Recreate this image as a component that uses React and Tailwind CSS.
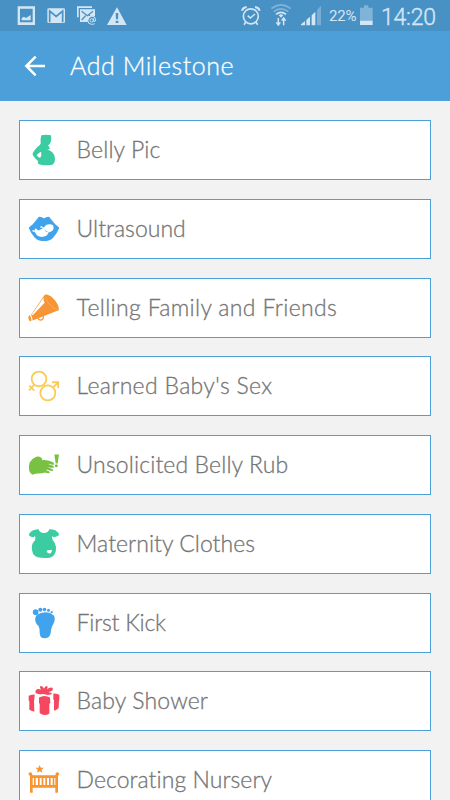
function BellyIcon() {
  return (
    <svg className="h-9 w-8 shrink-0" viewBox="54 60 96 108" fill="#3bcca2">
      <path fillRule="evenodd" d="M94 70q14-3 29 0q2 13-1 21q-2 6-8 9q3 5 6 9q-3 4-8 4q8 1 14 7q9 8 9 20q0 13-8 18q-17 3-32 1q-10-2-12-5q2-4 1-7q-7-6-14-15q-3-4-2-8q5-10 14-19q7-5 10-10q-2-12 2-25zM93 119q-4 1-13 10q1 4 10 9q4-5 4-10q0-5-1-9z" />
    </svg>
  );
}

function UltrasoundIcon() {
  return (
    <svg className="h-9 w-8 shrink-0" viewBox="54 56.4 96 108">
      <path fill="#42a3ed" d="M56 107q15-11 26-27q3-6 7-6q7 0 13 5q6-5 13-5q4 0 7 6q11 16 26 27q-6 16-18 29q-6 7-14 9q-14 3-28 0q-8-2-14-9q-12-13-18-29z" />
      <path fill="#fff" d="M105 104q0-6 7-7q10-2 17 2q5 8-1 16q-5 5-12 5q-2 7-7 11q-8 4-17 3q-10-1-13-7q-3-5-5-8q-5 0-7-2v-3h9q-3-3-1-5q4 0 7 4l4 2q7-4 12-5l-2-4q-5 2-6-2q3-3 7-1l3 4q2-4 5-3z" />
      <path stroke="#42a3ed" strokeWidth="2" fill="none" d="M104 114q4 4 9 5" />
    </svg>
  );
}

function MegaphoneIcon() {
  return (
    <svg className="h-9 w-8 shrink-0" viewBox="54 58.8 96 108" fill="#f79433">
      <path d="M58 134q7 5 6 17q-4 4-7-2q-4-8 1-15z" />
      <path d="M102 76q3-5 11-3q11 3 21 16q12 14 13 29q-3 4-7 4l-72 28q0-9-5-16z" />
      <path fill="#fff" d="M101 81q-2 8 3 16l-35 37q-2-1-4-1z" />
      <path fill="none" stroke="#fff" strokeWidth="1.5" d="M106 79q6 20 22 32q7 5 14 7" opacity=".4" />
      <path fill="none" stroke="#f79433" strokeWidth="3.5" d="M84 142q1 7 9 7q8-1 7-13" />
    </svg>
  );
}

function GenderIcon() {
  return (
    <svg className="h-9 w-8 shrink-0" viewBox="54 55.2 96 108" fill="none" stroke="#fbcb55" strokeWidth="5.5">
      <circle cx="87" cy="88" r="22" />
      <circle cx="113.500" cy="130" r="22.500" />
      <path d="M73 105L57 122M58 108l15 15M129 114l15-15M126 98h18.500v17" />
    </svg>
  );
}

function HandIcon() {
  return (
    <svg className="h-9 w-8 shrink-0" viewBox="54 57.6 96 108" fill="#79c143">
      <path d="M59 104q7-12 20-17q10-3 17 5q2 3 0 5q15-2 30 5q8 4 7 8q-3 2-8 0l-9-2q-1 2 2 2q12 2 15 8q-2 4-18 0q-2 1 2 2q13 4 13 8q-4 4-20-3l-1 2q10 3 11 7q-4 4-15 0q-11 4-23 3q-9 1-14 4q-10-6-11-17q-1-11 2-20z" />
      <path d="M133 80h14l-4 27h-6z" />
      <circle cx="139" cy="113.500" r="4.500" />
    </svg>
  );
}

function ShirtIcon() {
  return (
    <svg className="h-9 w-8 shrink-0" viewBox="54 57 96 108">
      <path fill="#3bcca2" d="M72 69q7-2 14-2q2 11 16 11q13 0 16-11q10 0 18 3q10 6 11 15q-7 5-16 6q-3-3-4-4q-2 7 1 12q8 8 10 21q1 11-4 21q-4 9-14 11q-18 3-37-1q-9-3-14-11q-6-12-3-25q2-8 9-15q3-6 0-13l-4 4q-9 0-15-7q5-12 16-15z" />
      <path fill="#fff" d="M110 132q4-5 9-2q5-3 7 0q0 5-4 9q-4 2-11-3z" />
    </svg>
  );
}

function FootIcon() {
  return (
    <svg className="h-9 w-8 shrink-0" viewBox="54 56.4 96 108" fill="#42a3ed">
      <circle cx="77" cy="78" r="8.500" />
      <circle cx="91" cy="70.500" r="6" />
      <circle cx="103.500" cy="70" r="5.500" />
      <circle cx="115.500" cy="72" r="4.500" />
      <circle cx="125" cy="78" r="3.500" />
      <path d="M76 105q-2-12 5-19q10-8 25-8q18 1 26 11q5 10-1 22q-7 11-8 22q-1 16-9 21q-11 5-21-1q-4-4-4-14q1-11-4-20q-7-6-9-14z" />
    </svg>
  );
}

function GiftIcon() {
  return (
    <svg className="h-9 w-8 shrink-0" viewBox="54 55.8 96 108" fill="#f5475f">
      <path d="M98 89q-12 2-21-3q-3-9 6-12q5-1 10 2q-5-8-2-11q8-1 11 8q2-8 9-8q4 3 0 10q8-8 16-5q4 4 0 8q-6 3-12 5q8 2 12 6q-12 5-29 0z" />
      <path d="M56 94q9-4 18-4l-1 17l-1 1l1 34q-10-3-15-6v-26l-2-1zM87 99q16-9 33 0l1 17l-3 2v29q-6 5-14 5q-9 0-15-6v-28l-2-2zM130 87q9 0 18 4v17l-1 1l-1 22q-6 6-14 8v-32l-2-2z" />
    </svg>
  );
}

function CribIcon() {
  return (
    <svg className="h-9 w-8 shrink-0" viewBox="54 292 96 108" fill="#f79433">
      <path d="M89 301l3.500 8l9 .5l-7 6l3 9l-8.500-5l-8.500 5l3-9l-7-6l9-.5z" />
      <circle cx="61" cy="328" r="5.500" />
      <circle cx="142" cy="328" r="5.500" />
      <path d="M60 330h8v54h-8zM136 330h8v54h-8zM65 332h73v8H65zM65 361h73v8H65zM72 338h5v25h-5zM84 338h5v25h-5zM95 338h5v25h-5zM106 338h5v25h-5zM117 338h5v25h-5zM128 338h5v25h-5z" />
    </svg>
  );
}

const MILESTONES = [
  { label: 'Belly Pic', Icon: BellyIcon, tracking: 'tracking-[0.12px]' },
  { label: 'Ultrasound', Icon: UltrasoundIcon, tracking: 'tracking-[0.02px]' },
  { label: 'Telling Family and Friends', Icon: MegaphoneIcon, tracking: 'tracking-[0.34px]' },
  { label: "Learned Baby's Sex", Icon: GenderIcon, tracking: 'tracking-[0.32px]' },
  { label: 'Unsolicited Belly Rub', Icon: HandIcon, tracking: 'tracking-[0.12px]' },
  { label: 'Maternity Clothes', Icon: ShirtIcon, tracking: 'tracking-[0.03px]' },
  { label: 'First Kick', Icon: FootIcon, tracking: 'tracking-[-0.22px]' },
  { label: 'Baby Shower', Icon: GiftIcon, tracking: 'tracking-[0.13px]' },
  { label: 'Decorating Nursery', Icon: CribIcon, tracking: 'tracking-[0.06px]' },
];

function StatusBar() {
  return (
    <div className="flex h-[31px] shrink-0 items-center justify-between bg-[#4891c5] pl-[17px] pr-[14px] font-[Roboto,sans-serif] text-[#d3e6f4]">
      {/* Notifications */}
      <div className="flex items-center">
        <svg className="mr-[9px] h-[31px] w-5" viewBox="51 0 60 93" fill="currentColor">
          <path fillRule="evenodd" d="M53 19h52v56H53zM60 26v41h38V26z" />
          <path d="M65 61v-7l7-4l6 4l14-9v16z" />
        </svg>
        <svg className="mr-[10px] h-[31px] w-5" viewBox="138 0 60 93" fill="currentColor">
          <rect x="142" y="25" width="53" height="44" rx="4" />
          <path d="M149 67V33l19.500 16L188 33v34" fill="none" stroke="#4891c5" strokeWidth="5" />
        </svg>
        <svg className="mr-[8px] h-[31px] w-[22px]" viewBox="228 0 66 93" fill="currentColor">
          <path d="M231 19h45v5h-40v28h-5z" />
          <path d="M240 28h45v20q-18-2-22 18h-23z" />
          <path d="M245 34l17 13l17-13M245 60l12-13M270 47l-4-3" fill="none" stroke="#4891c5" strokeWidth="4" />
          <circle cx="275" cy="61" r="5" fill="none" stroke="currentColor" strokeWidth="3" />
          <path d="M281 55v9q6 2 6-5q-1-11-12-11q-12 1-12 13q1 12 12 12q5 0 9-2" fill="none" stroke="currentColor" strokeWidth="3" />
        </svg>
        <svg className="h-[31px] w-[22px]" viewBox="316 0 66 93">
          <path d="M349 22l29 53h-59z" fill="currentColor" />
          <path d="M345 39h8l-1 19h-6zM345 62h8v7h-8z" fill="#4891c5" />
        </svg>
      </div>

      {/* System */}
      <div className="flex items-center">
        <svg className="mr-[9px] h-[31px] w-5" viewBox="47 0 60 93" fill="none" stroke="currentColor">
          <circle cx="76.500" cy="49" r="22.500" strokeWidth="5" />
          <path d="M67 47l8 7l14-12" strokeWidth="4.500" />
          <path d="M50 32q3-10 14-11M103 32q-3-10-14-11" strokeWidth="6" />
          <path d="M61 67l-5 7M92 67l5 7" strokeWidth="5" />
        </svg>
        <svg className="mr-[8px] h-[31px] w-[22px]" viewBox="137 0 66 93" fill="none" stroke="currentColor">
          <path d="M141 26q29-23 58 0M148 35q22-17 44 0" strokeWidth="5" opacity=".4" />
          <path d="M155 43q15-12 30 0" strokeWidth="5" />
          <path d="M163 46q7-6 14 0l-7 7z" fill="currentColor" stroke="none" />
          <path d="M162 54v20M156 67l6 8l6-8M178 76V55M172 62l6-8l6 8" strokeWidth="4.500" />
        </svg>
        <svg className="mr-[7px] h-[31px] w-[22px]" viewBox="228 0 66 93" fill="currentColor">
          <path d="M231 76v-3l12-10v13zM247 76V60l11-10v26zM263 76V46l11-11v41z" />
          <path d="M279 76V30l12-13v59z" opacity=".35" />
        </svg>
        <span className="w-[30px] whitespace-nowrap pt-0.5 text-[15px] leading-[31px] tracking-[-0.2px]">22%</span>
        <svg className="mr-[7px] h-[31px] w-[15px]" viewBox="403 0 45 93" fill="currentColor">
          <path d="M418 16h13v7h13v39h-38V23h12z" opacity=".4" />
          <path d="M406 62h38v13h-38z" />
        </svg>
        <span className="w-[55px] whitespace-nowrap pt-[3px] text-[23px] leading-[31px] font-light tracking-[-0.2px] [-webkit-text-stroke:0.4px]">
          14:20
        </span>
      </div>
    </div>
  );
}

export default function App() {
  return (
    <div className="flex h-[800px] w-[450px] flex-col overflow-hidden bg-[#f2f2f2] font-[Lato,sans-serif]">
      <StatusBar />
      <header className="flex h-[70px] shrink-0 items-center bg-[#4d9fda] pl-[24px] text-white">
        <svg className="mr-[24px] h-[22px] w-[22px]" viewBox="72 166 66 66" fill="none" stroke="currentColor" strokeWidth="7.500">
          <path d="M135 199H82M107 171l-28 28l28 28" />
        </svg>
        <h1 className="pb-[3px] text-[25px] leading-[30px] font-light tracking-[0.55px] [-webkit-text-stroke:0.3px]">Add Milestone</h1>
      </header>

      <ul className="flex flex-col gap-[18.750px] px-[19px] pt-[19.100px]">
        {MILESTONES.map(({ label, Icon, tracking }) => (
          <li key={label} className="flex h-[60px] shrink-0 items-center border border-[#4d9fda] bg-white pl-2">
            <Icon />
            <span
              className={`ml-[16.6px] pb-0.5 text-[23px] leading-[30px] font-light whitespace-nowrap text-[#757575] [-webkit-text-stroke:0.3px] ${tracking}`}
            >
              {label}
            </span>
          </li>
        ))}
      </ul>
    </div>
  );
}
